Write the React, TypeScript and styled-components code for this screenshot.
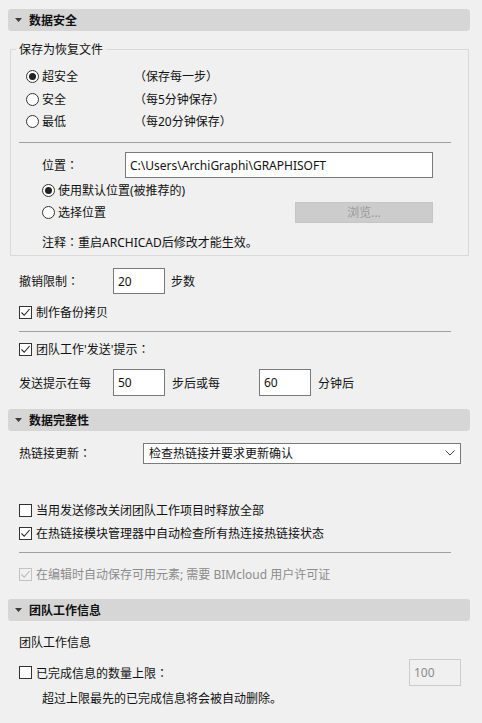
import React, { FC } from "react";
import styled, { createGlobalStyle } from "styled-components";

const GlobalStyle = createGlobalStyle`
  html, body {
    margin: 0;
    padding: 0;
    background: #f0f0f0;
  }
  body {
    font-family: "Noto Sans", "Noto Sans CJK SC", sans-serif;
    font-size: 12px;
    color: #000;
  }
`;

const Page = styled.div`
  width: 482px;
  height: 723px;
  box-sizing: border-box;
  padding: 9px 0 0 8px;
  background: #f0f0f0;
  display: flex;
  flex-direction: column;
  overflow: hidden;
`;

const Header = styled.div<{ $top: number }>`
  margin-top: ${(p) => p.$top}px;
  width: 462px;
  height: 22px;
  flex: none;
  background: #d6d6d6;
  border-radius: 3px;
  display: flex;
  align-items: center;
  padding-left: 7px;
  box-sizing: border-box;
  gap: 7px;
  font-weight: 700;
  font-size: 12px;
  color: #111;
`;

const Group = styled.div`
  position: relative;
  margin: 18px 0 0 2px;
  width: 459px;
  height: 207px;
  box-sizing: border-box;
  border: 1px solid #d9d9d9;
  padding: 0 17px 0 0;
  display: flex;
  flex-direction: column;
`;

const Legend = styled.span`
  position: absolute;
  top: -9px;
  left: 5px;
  padding: 0 3px;
  background: #f0f0f0;
  line-height: 17px;
  color: #111;
`;

const Body = styled.div<{ $indent: number; $w?: number }>`
  display: flex;
  flex-direction: column;
  padding-left: ${(p) => p.$indent}px;
  width: ${(p) => (p.$w ? `${p.$w}px` : "auto")};
`;

const Row = styled.div<{ $top?: number; $h?: number }>`
  display: flex;
  align-items: center;
  margin-top: ${(p) => p.$top ?? 0}px;
  height: ${(p) => p.$h ?? 22}px;
  flex: none;
  white-space: nowrap;
`;

const Label = styled.span<{ $w?: number; $muted?: boolean }>`
  width: ${(p) => (p.$w ? `${p.$w}px` : "auto")};
  flex: none;
  color: ${(p) => (p.$muted ? "#8c8c8c" : "#111")};
`;

const Colon = styled.span`
  font-family: "Noto Sans CJK TC", sans-serif;
`;

const Divider = styled.div<{ $top: number; $w: number; $color?: string }>`
  margin-top: ${(p) => p.$top}px;
  width: ${(p) => p.$w}px;
  height: 1px;
  flex: none;
  background: ${(p) => p.$color ?? "#a0a0a0"};
`;

const Field = styled.div<{ $w: number; $h?: number; $disabled?: boolean }>`
  width: ${(p) => p.$w}px;
  height: ${(p) => p.$h ?? 26}px;
  box-sizing: border-box;
  border: 1px solid ${(p) => (p.$disabled ? "#cccccc" : "#7a7a7a")};
  background: ${(p) => (p.$disabled ? "#f0f0f0" : "#fff")};
  color: ${(p) => (p.$disabled ? "#8a8a8a" : "#111")};
  display: flex;
  align-items: center;
  padding-left: 4px;
  flex: none;
`;

const Select = styled(Field)`
  justify-content: space-between;
  padding: 0 5px 0 5px;
`;

const Button = styled.div`
  width: 138px;
  height: 21px;
  background: #cccccc;
  border: 1px solid #c6c6c6;
  box-sizing: border-box;
  color: #9a9a9a;
  display: flex;
  align-items: center;
  justify-content: center;
  flex: none;
`;

const RadioCircle = styled.span<{ $on?: boolean }>`
  width: 13px;
  height: 13px;
  box-sizing: border-box;
  border: 1px solid #333;
  border-radius: 50%;
  background: #fff;
  margin-right: 3px;
  flex: none;
  display: flex;
  align-items: center;
  justify-content: center;
  &::after {
    content: "";
    width: 7px;
    height: 7px;
    border-radius: 50%;
    background: ${(p) => (p.$on ? "#222" : "transparent")};
  }
`;

const Box = styled.span<{ $disabled?: boolean }>`
  width: 13px;
  height: 13px;
  box-sizing: border-box;
  border: 1px solid ${(p) => (p.$disabled ? "#c2c2c2" : "#333")};
  background: ${(p) => (p.$disabled ? "#f0f0f0" : "#fff")};
  margin-right: 4px;
  flex: none;
  display: flex;
  align-items: center;
  justify-content: center;
`;

const Spacer = styled.span<{ $w: number }>`
  width: ${(p) => p.$w}px;
  flex: none;
`;

const FlexFill = styled.span`
  flex: 1;
`;

const Triangle = () => (
  <svg width="7" height="4" viewBox="0 0 7 4">
    <path d="M0 0H7L3.5 4Z" fill="#3c3c3c" />
  </svg>
);

const Chevron = () => (
  <svg width="10" height="6" viewBox="0 0 10 6">
    <path d="M0.5 0.5L5 5L9.5 0.5" fill="none" stroke="#444" strokeWidth="1" />
  </svg>
);

const Radio: FC<{ on?: boolean; label: string; w?: number }> = ({ on, label, w }) => (
  <>
    <RadioCircle $on={on} />
    <Label $w={w}>{label}</Label>
  </>
);

const Check: FC<{ on?: boolean; disabled?: boolean; label: React.ReactNode }> = ({
  on,
  disabled,
  label,
}) => (
  <>
    <Box $disabled={disabled}>
      {on && (
        <svg width="11" height="11" viewBox="0 0 11 11">
          <path
            d="M1.5 5.5L4.2 8.3L9.6 2"
            fill="none"
            stroke={disabled ? "#b8b8b8" : "#222"}
            strokeWidth="1.1"
          />
        </svg>
      )}
    </Box>
    <Label $muted={disabled}>{label}</Label>
  </>
);

export default function App() {
  return (
    <>
      <GlobalStyle />
      <Page>
        <Header $top={0}>
          <Triangle />
          数据安全
        </Header>

        <Group>
          <Legend>保存为恢复文件</Legend>
          <Body $indent={15}>
            <Row $top={15}>
              <Radio on label="超安全" w={92} />
              <Label>（保存每一步）</Label>
            </Row>
            <Row $top={1}>
              <Radio label="安全" w={92} />
              <Label>（每5分钟保存）</Label>
            </Row>
            <Row>
              <Radio label="最低" w={92} />
              <Label>（每20分钟保存）</Label>
            </Row>
          </Body>
          <Body $indent={8}>
            <Divider $top={10} $w={432} />
          </Body>
          <Body $indent={31}>
            <Row $top={9} $h={26}>
              <Label $w={83}>
                位置<Colon>：</Colon>
              </Label>
              <Field $w={308}>C:\Users\ArchiGraphi\GRAPHISOFT</Field>
            </Row>
            <Row $top={1}>
              <Radio on label="使用默认位置(被推荐的)" />
            </Row>
            <Row>
              <Radio label="选择位置" w={237} />
              <Button>浏览...</Button>
            </Row>
            <Row $top={8}>
              <Label>
                注释<Colon>：</Colon>重启ARCHICAD后修改才能生效。
              </Label>
            </Row>
          </Body>
        </Group>

        <Body $indent={11}>
          <Row $top={12} $h={26}>
            <Label $w={94}>
              撤销限制<Colon>：</Colon>
            </Label>
            <Field $w={52}>20</Field>
            <Spacer $w={6} />
            <Label>步数</Label>
          </Row>
          <Row $top={7}>
            <Check on label="制作备份拷贝" />
          </Row>
          <Divider $top={8} $w={432} />
          <Row $top={6}>
            <Check
              on
              label={
                <>
                  团队工作'发送'提示<Colon>：</Colon>
                </>
              }
            />
          </Row>
          <Row $top={9} $h={27}>
            <Label $w={94}>发送提示在每</Label>
            <Field $w={52} $h={27}>50</Field>
            <Spacer $w={7} />
            <Label $w={87}>步后或每</Label>
            <Field $w={52} $h={27}>60</Field>
            <Spacer $w={7} />
            <Label>分钟后</Label>
          </Row>
        </Body>

        <Header $top={13}>
          <Triangle />
          数据完整性
        </Header>

        <Body $indent={11}>
          <Row $top={11}>
            <Label $w={124}>
              热链接更新<Colon>：</Colon>
            </Label>
            <Select $w={318} $h={21}>
              <span>检查热链接并要求更新确认</span>
              <Chevron />
            </Select>
          </Row>
          <Row $top={35}>
            <Check label="当用发送修改关闭团队工作项目时释放全部" />
          </Row>
          <Row $top={1}>
            <Check on label="在热链接模块管理器中自动检查所有热连接热链接状态" />
          </Row>
          <Divider $top={8} $w={432} />
          <Row $top={10}>
            <Check on disabled label="在编辑时自动保存可用元素; 需要 BIMcloud 用户许可证" />
          </Row>
        </Body>

        <Header $top={14}>
          <Triangle />
          团队工作信息
        </Header>

        <Body $indent={11} $w={442}>
          <Row $top={10}>
            <Label>团队工作信息</Label>
          </Row>
          <Row $top={6} $h={27}>
            <Check
              label={
                <>
                  已完成信息的数量上限<Colon>：</Colon>
                </>
              }
            />
            <FlexFill />
            <Field $w={52} $h={27} $disabled>
              100
            </Field>
          </Row>
          <Row $top={1}>
            <Spacer $w={23} />
            <Label>超过上限最先的已完成信息将会被自动删除。</Label>
          </Row>
        </Body>
      </Page>
    </>
  );
}
